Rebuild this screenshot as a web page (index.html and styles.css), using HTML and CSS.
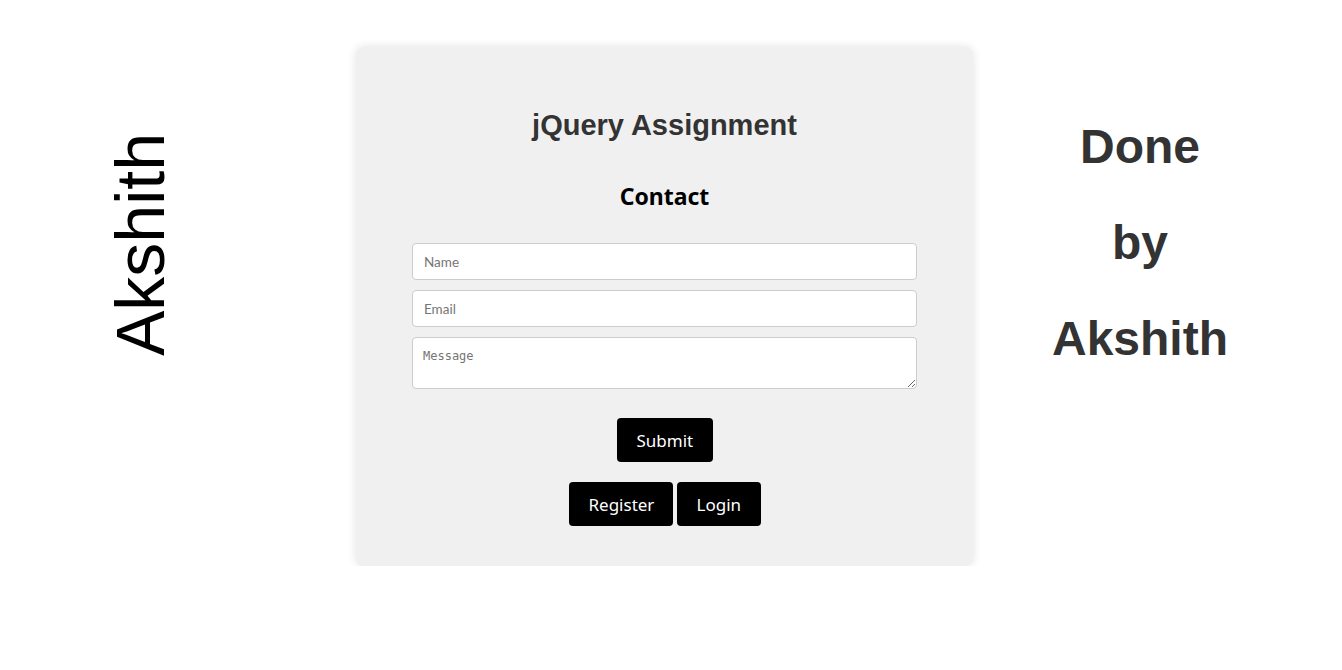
FILE: index.html
```html
<!DOCTYPE html>
<html>
<head>
<meta charset="utf-8">
<link rel="stylesheet" href="styles.css">
</head>
<body>
<div class="page">
  <div class="side-left">
    <div class="vertical">Akshith</div>
  </div>
  <div class="card">
    <h2 class="title">jQuery Assignment</h2>
    <h3 class="subtitle">Contact</h3>
    <form class="form">
      <input class="field" type="text" placeholder="Name">
      <input class="field" type="text" placeholder="Email">
      <textarea class="field area" placeholder="Message"></textarea>
      <div class="row submit-row">
        <button type="button" class="btn btn-submit">Submit</button>
      </div>
      <div class="row links-row">
        <button type="button" class="btn btn-register">Register</button>
        <button type="button" class="btn btn-login">Login</button>
      </div>
    </form>
  </div>
  <div class="side-right">
    <div class="done">Done</div>
    <div class="done">by</div>
    <div class="done">Akshith</div>
  </div>
</div>
</body>
</html>
```
FILE: styles.css
```css
* { box-sizing: border-box; }
html, body { margin: 0; padding: 0; background: #fff; }
body { font-family: "Liberation Sans", Arial, sans-serif; }

.page {
  display: flex;
  align-items: flex-start;
  padding-top: 47px;
}

.side-left {
  width: 276px;
  flex: none;
  display: flex;
  justify-content: center;
  padding-top: 86px;
}
.vertical {
  writing-mode: vertical-rl;
  transform: rotate(180deg);
  font-size: 68px;
  line-height: 68px;
  color: #000;
  margin-left: 4px;
}

.card {
  width: 617px;
  margin-left: 80px;
  flex: none;
  background: #f0f0f0;
  border-radius: 8px;
  box-shadow: 0 0 10px rgba(0,0,0,0.12);
  padding: 62px 56px 40px;
  text-align: center;
}
.title {
  margin: 0;
  font-family: "Liberation Sans", Arial, sans-serif;
  font-size: 29px;
  line-height: 32px;
  font-weight: bold;
  color: #333;
}
.subtitle {
  margin: 39px 0 30px;
  font-family: "Noto Sans", "Open Sans", sans-serif;
  font-size: 23px;
  line-height: 33px;
  font-weight: bold;
  color: #000;
}
.form {
  display: flex;
  flex-direction: column;
  gap: 10px;
}
.field {
  display: block;
  width: 100%;
  height: 37px;
  border: 1px solid #ccc;
  border-radius: 4px;
  background: #fff;
  padding: 0 11px;
  font-family: "Lato", "Noto Sans", sans-serif;
  font-size: 13.5px;
  color: #333;
  outline: none;
}
.field::placeholder { color: #757575; }
.area {
  height: 52px;
  padding: 11px 10px;
  font-family: "DejaVu Sans Mono", monospace;
  font-size: 12px;
  resize: vertical;
}
.row {
  display: flex;
  justify-content: center;
  gap: 4px;
}
.submit-row { margin-top: 19px; }
.links-row { margin-top: 10px; }
.btn {
  height: 44px;
  border: none;
  border-radius: 4px;
  background: #000;
  color: #fff;
  font-family: "Noto Sans", "Open Sans", sans-serif;
  font-size: 17px;
  padding: 0 20px;
  cursor: pointer;
}
.btn-submit { width: 96px; }
.btn-register { width: 104px; }
.btn-login { width: 84px; }

.side-right {
  width: 334px;
  flex: none;
  text-align: center;
  padding-top: 52px;
}
.done {
  font-size: 48px;
  line-height: 96px;
  font-weight: bold;
  color: #333;
}
```
